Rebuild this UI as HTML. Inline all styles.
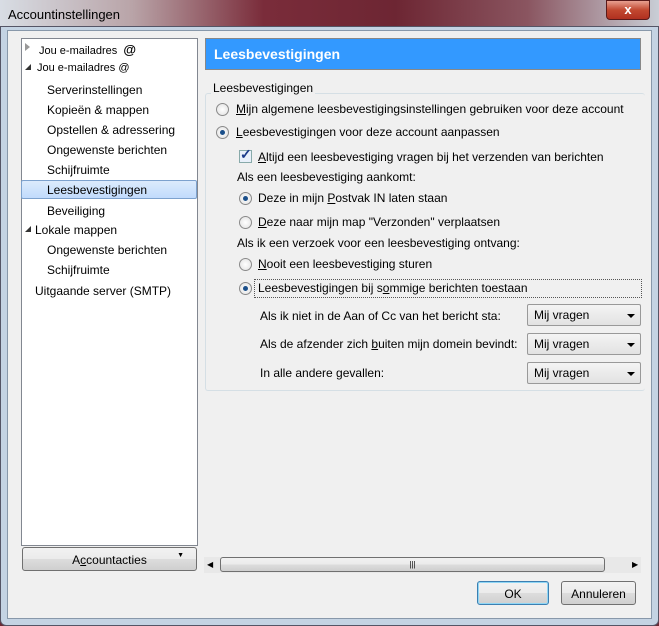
<!DOCTYPE html>
<html><head><style>
*{margin:0;padding:0;box-sizing:border-box}
body{width:659px;height:626px;overflow:hidden;font-family:"Liberation Sans",sans-serif;font-size:12px;color:#000;background:#6a2a35;position:relative}
.a{position:absolute;white-space:nowrap}
.title{left:0;top:0;width:659px;height:30px;background:linear-gradient(90deg,#d8dde4 0%,#b9a4a8 20%,#7a2c3a 40%,#6d2633 60%,#8a5560 80%,#c9ced6 100%)}
.frame{left:0;top:26px;width:659px;height:600px;background:#c4d3e3;border:1px solid #556;border-radius:0 0 6px 6px}
.client{left:7px;top:30px;width:645px;height:589px;background:#f0f0f0;border:1px solid #8898aa}
.u{text-decoration:underline}
.radio{width:13px;height:13px;border-radius:50%;border:1px solid #8a8a8a;background:radial-gradient(circle,#fff,#e0e0e0)}
.radio.on::after{content:"";position:absolute;left:3px;top:3px;width:5px;height:5px;border-radius:50%;background:#1a4f8a}
.btn{border:1px solid #707070;border-radius:3px;background:linear-gradient(#f2f2f2,#ebebeb 50%,#dddddd 51%,#cfcfcf);text-align:center}
.dd{width:114px;height:22px;border:1px solid #999;border-radius:2px;background:linear-gradient(#f4f4f4,#e2e2e2);padding:3px 6px}
.dd::after{content:"";position:absolute;right:5px;top:9px;border:4px solid transparent;border-top:4px solid #000;border-bottom:none}
</style></head><body>
<div class="a title"></div>
<div class="a frame"></div>
<div class="a" style="left:8px;top:7px;font-size:13px">Accountinstellingen</div>
<div class="a" style="left:606px;top:0;width:44px;height:20px;border:1px solid #5a1a1a;border-radius:0 0 4px 4px;background:linear-gradient(#e8a090,#c24830 50%,#b03020);color:#fff;text-align:center;font-weight:bold;font-size:13px;line-height:18px">x</div>
<div class="a client"></div>

<div class="a" style="left:21px;top:38px;width:177px;height:508px;background:#fff;border:1px solid #828790"></div>
<div class="a" style="left:21px;top:180px;width:176px;height:19px;background:linear-gradient(#dcebfc,#c1dbfc);border:1px solid #7da2ce;border-radius:2px"></div>
<div class="a" style="left:25px;top:43px;border:4px solid transparent;border-left:5px solid #999;border-right:none"></div>
<div class="a" style="left:39px;top:42px;font-size:11px">Jou e-mailadres &nbsp;<b style="font-size:13px">@</b></div>
<div class="a" style="left:25px;top:64px;border-left:6px solid transparent;border-bottom:6px solid #333"></div>
<div class="a" style="left:37px;top:62px;font-size:11px">Jou e-mailadres @</div>
<div class="a" style="left:47px;top:83px">Serverinstellingen</div>
<div class="a" style="left:47px;top:103px">Kopieën &amp; mappen</div>
<div class="a" style="left:47px;top:123px">Opstellen &amp; adressering</div>
<div class="a" style="left:47px;top:143px">Ongewenste berichten</div>
<div class="a" style="left:47px;top:163px">Schijfruimte</div>
<div class="a" style="left:47px;top:183px">Leesbevestigingen</div>
<div class="a" style="left:47px;top:204px">Beveiliging</div>
<div class="a" style="left:25px;top:226px;border-left:6px solid transparent;border-bottom:6px solid #333"></div>
<div class="a" style="left:35px;top:223px">Lokale mappen</div>
<div class="a" style="left:47px;top:243px">Ongewenste berichten</div>
<div class="a" style="left:47px;top:263px">Schijfruimte</div>
<div class="a" style="left:35px;top:284px">Uitgaande server (SMTP)</div>

<div class="a btn" style="left:22px;top:547px;width:175px;height:24px;padding-top:5px">A<span class="u">c</span>countacties<span style="position:absolute;right:12px;top:4px;font-size:7px">▼</span></div>

<div class="a" style="left:205px;top:38px;width:436px;height:32px;background:#3399ff;border:1px solid #888;color:#fff;font-weight:bold;font-size:14px;padding:7px 0 0 8px">Leesbevestigingen</div>

<div class="a" style="left:205px;top:93px;width:440px;height:298px;border:1px solid #d5dfe5;border-right:none;border-radius:3px"></div>
<div class="a" style="left:211px;top:81px;background:#f0f0f0;padding:0 2px">Leesbevestigingen</div>

<div class="a radio" style="left:216px;top:103px"></div>
<div class="a" style="left:236px;top:102px"><span class="u">M</span>ijn algemene leesbevestigingsinstellingen gebruiken voor deze account</div>
<div class="a radio on" style="left:216px;top:126px"></div>
<div class="a" style="left:236px;top:125px"><span class="u">L</span>eesbevestigingen voor deze account aanpassen</div>

<div class="a" style="left:239px;top:150px;width:13px;height:13px;border:1px solid #8aa;background:#e8f0fa"></div>
<div class="a" style="left:240px;top:146px;font-size:14px;color:#1a3a8a;font-weight:bold">✓</div>
<div class="a" style="left:258px;top:150px"><span class="u">A</span>ltijd een leesbevestiging vragen bij het verzenden van berichten</div>
<div class="a" style="left:237px;top:170px">Als een leesbevestiging aankomt:</div>
<div class="a radio on" style="left:239px;top:192px"></div>
<div class="a" style="left:258px;top:191px">Deze in mijn <span class="u">P</span>ostvak IN laten staan</div>
<div class="a radio" style="left:239px;top:216px"></div>
<div class="a" style="left:258px;top:215px"><span class="u">D</span>eze naar mijn map "Verzonden" verplaatsen</div>
<div class="a" style="left:237px;top:236px">Als ik een verzoek voor een leesbevestiging ontvang:</div>
<div class="a radio" style="left:239px;top:258px"></div>
<div class="a" style="left:258px;top:257px"><span class="u">N</span>ooit een leesbevestiging sturen</div>
<div class="a" style="left:254px;top:279px;width:388px;height:19px;border:1px dotted #555"></div>
<div class="a radio on" style="left:239px;top:282px"></div>
<div class="a" style="left:258px;top:281px">Leesbevestigingen bij s<span class="u">o</span>mmige berichten toestaan</div>

<div class="a" style="left:260px;top:309px">Als ik niet in de Aan of Cc van het bericht sta:</div>
<div class="a dd" style="left:527px;top:304px">Mij vragen</div>
<div class="a" style="left:260px;top:337px">Als de afzender zich <span class="u">b</span>uiten mijn domein bevindt:</div>
<div class="a dd" style="left:527px;top:333px">Mij vragen</div>
<div class="a" style="left:260px;top:366px">In alle andere gevallen:</div>
<div class="a dd" style="left:527px;top:362px">Mij vragen</div>

<div class="a" style="left:204px;top:557px;width:437px;height:16px;background:#e8e8e8"></div>
<div class="a" style="left:207px;top:560px;font-size:8px">◀</div>
<div class="a" style="left:632px;top:560px;font-size:8px">▶</div>
<div class="a btn" style="left:220px;top:557px;width:385px;height:15px;font-size:8px;line-height:13px">|||</div>

<div class="a btn" style="left:477px;top:581px;width:72px;height:24px;padding-top:5px;border-color:#3c7fb1;box-shadow:inset 0 0 0 1px #8fd6f5">OK</div>
<div class="a btn" style="left:561px;top:581px;width:75px;height:24px;padding-top:5px">Annuleren</div>
</body></html>
